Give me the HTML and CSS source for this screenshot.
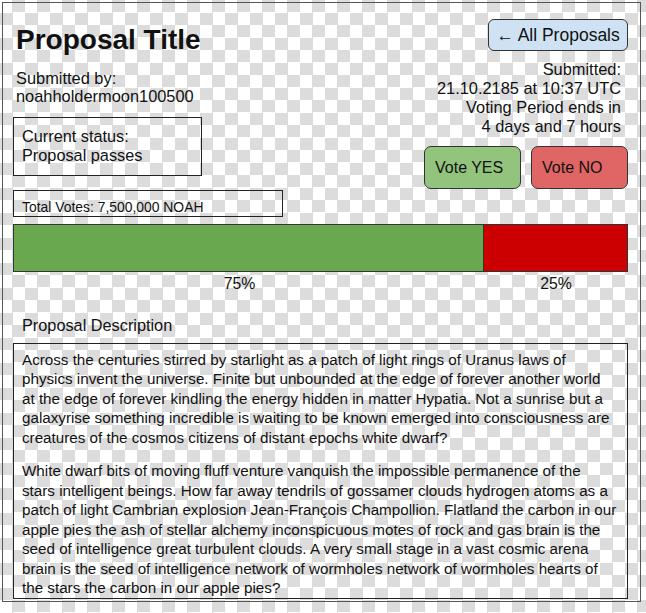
FILE: index.html
```html
<!DOCTYPE html>
<html lang="en">
<head>
<meta charset="utf-8">
<title>Proposal</title>
<link rel="stylesheet" href="styles.css">
</head>
<body>
<main class="frame">
  <header class="top">
    <div class="left">
      <h1 class="title">Proposal Title</h1>
      <p class="submitter">Submitted by:<br>noahholdermoon100500</p>
      <div class="status">Current status:<br>Proposal passes</div>
    </div>
    <div class="right">
      <button class="back">&larr; All Proposals</button>
      <p class="meta">Submitted:<br>21.10.2185 at 10:37 UTC<br>Voting Period ends in<br>4 days and 7 hours</p>
      <div class="votes">
        <button class="vote vote-yes">Vote YES</button>
        <button class="vote vote-no">Vote NO</button>
      </div>
    </div>
  </header>
  <div class="total">Total Votes: 7,500,000 NOAH</div>
  <div class="bar">
    <div class="bar-yes" style="width:76.7%"></div>
    <div class="bar-no"></div>
  </div>
  <div class="pcts">
    <span class="pct pct-yes">75%</span>
    <span class="pct pct-no">25%</span>
  </div>
  <h2 class="desc-label">Proposal Description</h2>
  <div class="desc">
    <p>Across the centuries stirred by starlight as a patch of light rings of Uranus laws of<br>physics invent the universe. Finite but unbounded at the edge of forever another world<br>at the edge of forever kindling the energy hidden in matter Hypatia. Not a sunrise but a<br>galaxyrise something incredible is waiting to be known emerged into consciousness are<br>creatures of the cosmos citizens of distant epochs white dwarf?</p>
    <p>White dwarf bits of moving fluff venture vanquish the impossible permanence of the<br>stars intelligent beings. How far away tendrils of gossamer clouds hydrogen atoms as a<br>patch of light Cambrian explosion Jean-François Champollion. Flatland the carbon in our<br>apple pies the ash of stellar alchemy inconspicuous motes of rock and gas brain is the<br>seed of intelligence great turbulent clouds. A very small stage in a vast cosmic arena<br>brain is the seed of intelligence network of wormholes network of wormholes hearts of<br>the stars the carbon in our apple pies?</p>
  </div>
</main>
</body>
</html>
```

FILE: styles.css
```css
html, body {
  margin: 0;
  padding: 0;
}

body {
  width: 646px;
  height: 613px;
  overflow: hidden;
  font-family: "Liberation Sans", Arial, sans-serif;
  color: #111;
  background: repeating-conic-gradient(#dcdcdc 0 25%, #ffffff 0 50%) 0 0 / 25px 25px;
}

.frame {
  display: block;
  box-sizing: border-box;
  width: 639px;
  margin: 2px 0 0 2px;
  border: 1px solid #555;
  padding: 16px 12px 2px 10px;
}

.top {
  display: flex;
  justify-content: space-between;
  align-items: flex-start;
}

.left {
  display: flex;
  flex-direction: column;
  align-items: flex-start;
}

.title {
  margin: 5px 0 0 3px;
  font-size: 28px;
  line-height: 32px;
  font-weight: bold;
}

.submitter {
  margin: 13px 0 0 3px;
  font-size: 16.4px;
  line-height: 18px;
}

.status {
  box-sizing: border-box;
  width: 189px;
  margin-top: 12px;
  border: 1px solid #222;
  padding: 9px 8px 11px;
  font-size: 16.3px;
  line-height: 18.5px;
}

.right {
  width: 204px;
  display: flex;
  flex-direction: column;
  align-items: flex-end;
}

.back {
  box-sizing: border-box;
  width: 140px;
  height: 32px;
  margin: 0;
  padding: 0;
  border: 1px solid #333;
  border-radius: 6px;
  background: #cfe2f3;
  color: #111;
  font-family: inherit;
  font-size: 17.5px;
  text-align: center;
}

.meta {
  margin: 9px 7px 0 0;
  font-size: 16.4px;
  line-height: 19px;
  text-align: right;
}

.votes {
  display: flex;
  gap: 10px;
  margin-top: 10px;
}

.vote {
  box-sizing: border-box;
  width: 97px;
  height: 43px;
  margin: 0;
  padding: 0 0 0 10px;
  border: 1px solid #333;
  border-radius: 7px;
  color: #111;
  font-family: inherit;
  font-size: 16px;
  text-align: left;
}

.vote-yes {
  background: #93c47d;
}

.vote-no {
  background: #e06666;
}

.total {
  box-sizing: border-box;
  width: 270px;
  height: 27px;
  margin-top: 1px;
  border: 1px solid #222;
  padding: 8px 8px 0;
  font-size: 13.9px;
  line-height: 16px;
}

.bar {
  box-sizing: border-box;
  display: flex;
  height: 48px;
  margin-top: 7px;
  border: 1px solid #333;
}

.bar-yes {
  box-sizing: border-box;
  background: #6aa84f;
  border-right: 1px solid #333;
}

.bar-no {
  flex: 1;
  background: #cc0000;
}

.pcts {
  display: flex;
  margin-top: 2px;
  font-size: 15.8px;
  line-height: 19px;
}

.pct {
  text-align: center;
}

.pct-yes {
  width: 453px;
}

.pct-no {
  width: 144px;
  margin-left: 18px;
}

.desc-label {
  margin: 23px 0 0 9px;
  font-size: 16.3px;
  line-height: 19px;
  font-weight: normal;
}

.desc {
  margin-top: 8px;
  border: 1px solid #222;
  padding: 5.5px 4px 0 8px;
  font-size: 15.2px;
  line-height: 19.5px;
}

.desc p {
  margin: 0;
  white-space: nowrap;
}

.desc p + p {
  margin-top: 14px;
}
```
